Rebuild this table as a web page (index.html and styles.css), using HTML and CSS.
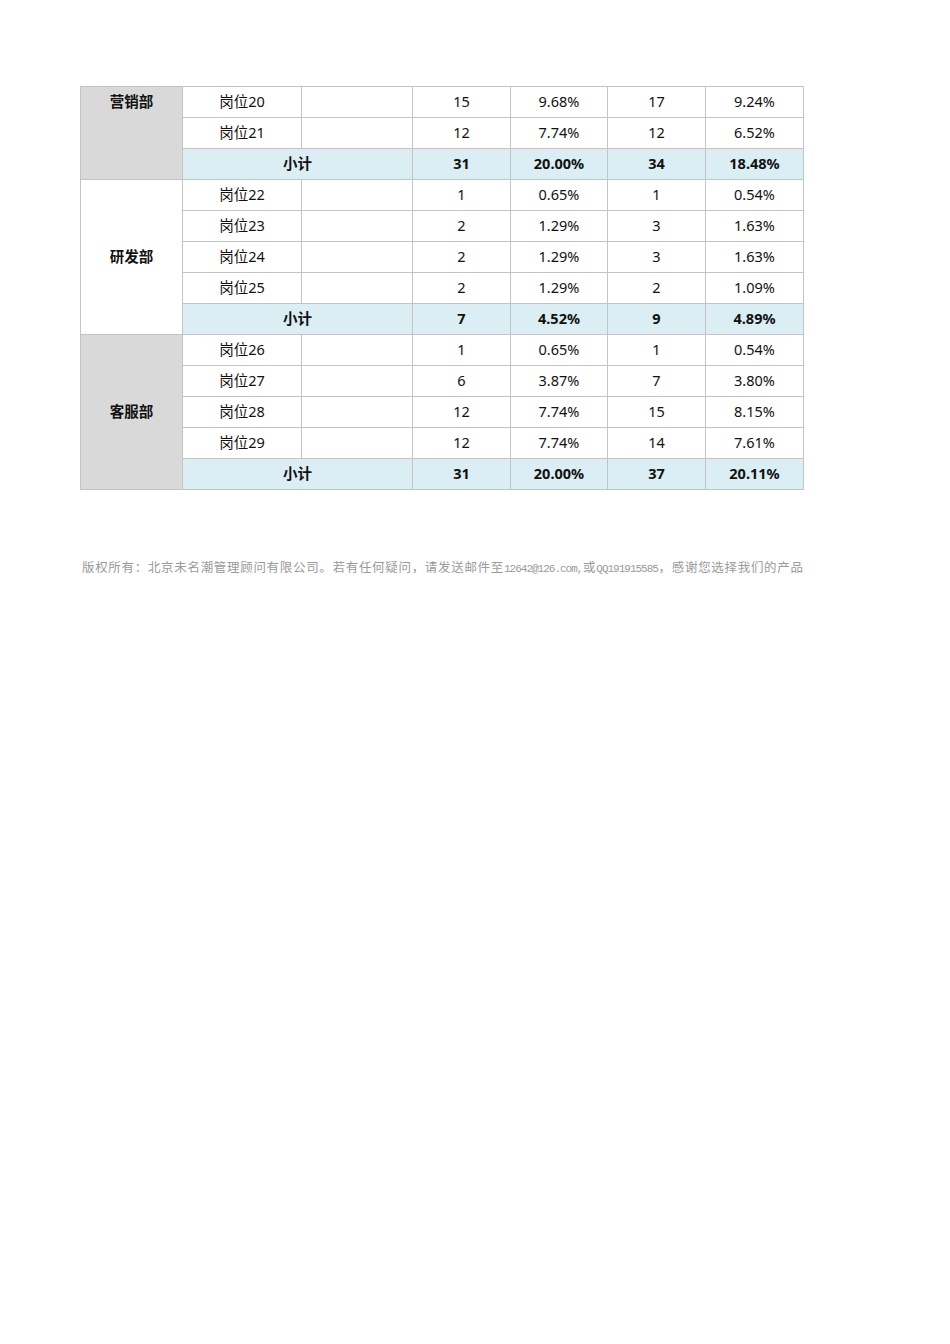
FILE: index.html
```html
<!DOCTYPE html>
<html lang="zh">
<head>
<meta charset="utf-8">
<title>岗位统计</title>
<link rel="stylesheet" href="styles.css">
</head>
<body>
<div class="page">
<table class="grid">
<colgroup>
<col class="c1"><col class="c2"><col class="c3"><col class="c4"><col class="c5"><col class="c6"><col class="c7">
</colgroup>
<tbody>
<tr><td class="dept gray top" rowspan="3">营销部</td><td>岗位20</td><td></td><td>15</td><td>9.68%</td><td>17</td><td>9.24%</td></tr>
<tr><td>岗位21</td><td></td><td>12</td><td>7.74%</td><td>12</td><td>6.52%</td></tr>
<tr class="sub"><td colspan="2">小计</td><td>31</td><td>20.00%</td><td>34</td><td>18.48%</td></tr>

<tr><td class="dept" rowspan="5">研发部</td><td>岗位22</td><td></td><td>1</td><td>0.65%</td><td>1</td><td>0.54%</td></tr>
<tr><td>岗位23</td><td></td><td>2</td><td>1.29%</td><td>3</td><td>1.63%</td></tr>
<tr><td>岗位24</td><td></td><td>2</td><td>1.29%</td><td>3</td><td>1.63%</td></tr>
<tr><td>岗位25</td><td></td><td>2</td><td>1.29%</td><td>2</td><td>1.09%</td></tr>
<tr class="sub"><td colspan="2">小计</td><td>7</td><td>4.52%</td><td>9</td><td>4.89%</td></tr>

<tr><td class="dept gray" rowspan="5">客服部</td><td>岗位26</td><td></td><td>1</td><td>0.65%</td><td>1</td><td>0.54%</td></tr>
<tr><td>岗位27</td><td></td><td>6</td><td>3.87%</td><td>7</td><td>3.80%</td></tr>
<tr><td>岗位28</td><td></td><td>12</td><td>7.74%</td><td>15</td><td>8.15%</td></tr>
<tr><td>岗位29</td><td></td><td>12</td><td>7.74%</td><td>14</td><td>7.61%</td></tr>
<tr class="sub"><td colspan="2">小计</td><td>31</td><td>20.00%</td><td>37</td><td>20.11%</td></tr>
</tbody>
</table>
<p class="footer">版权所有：北京未名潮管理顾问有限公司。若有任何疑问，请发送邮件至<span class="latin">12642@126.com,</span>或<span class="latin">QQ191915585</span>，感谢您选择我们的产品</p>
</div>
</body>
</html>
```

FILE: styles.css
```css
html, body {
  margin: 0;
  padding: 0;
  background: #ffffff;
}

.page {
  padding: 86px 0 0 80px;
  width: 723px;
}

.grid {
  border-collapse: collapse;
  table-layout: fixed;
  width: 723px;
  font-family: "Noto Sans", "Open Sans", "Noto Sans CJK SC", sans-serif;
  font-size: 14.5px;
  color: #111111;
}

.c1 { width: 102px; }
.c2 { width: 119px; }
.c3 { width: 111px; }
.c4 { width: 98px; }
.c5 { width: 97px; }
.c6 { width: 98px; }
.c7 { width: 98px; }

.grid td {
  border: 1px solid #c4c4c4;
  height: 28px;
  padding: 0 0 2px 0;
  text-align: center;
  vertical-align: middle;
  line-height: 28px;
  white-space: nowrap;
}

.grid td.dept {
  font-weight: 700;
  background: #ffffff;
}

.grid td.gray {
  background: #d9d9d9;
}

.grid td.top {
  vertical-align: top;
}

.grid tr.sub td {
  background: #daeef3;
  font-weight: 700;
}

.footer {
  margin: 67px 0 0 2px;
  width: 721px;
  font-family: "Liberation Serif", "Noto Sans CJK SC", serif;
  font-size: 12.5px;
  color: #9a9a9a;
  text-align: justify;
  text-align-last: justify;
  white-space: nowrap;
}

.footer .latin {
  font-family: "Liberation Mono", monospace;
  font-size: 11px;
  letter-spacing: -1px;
}
```
